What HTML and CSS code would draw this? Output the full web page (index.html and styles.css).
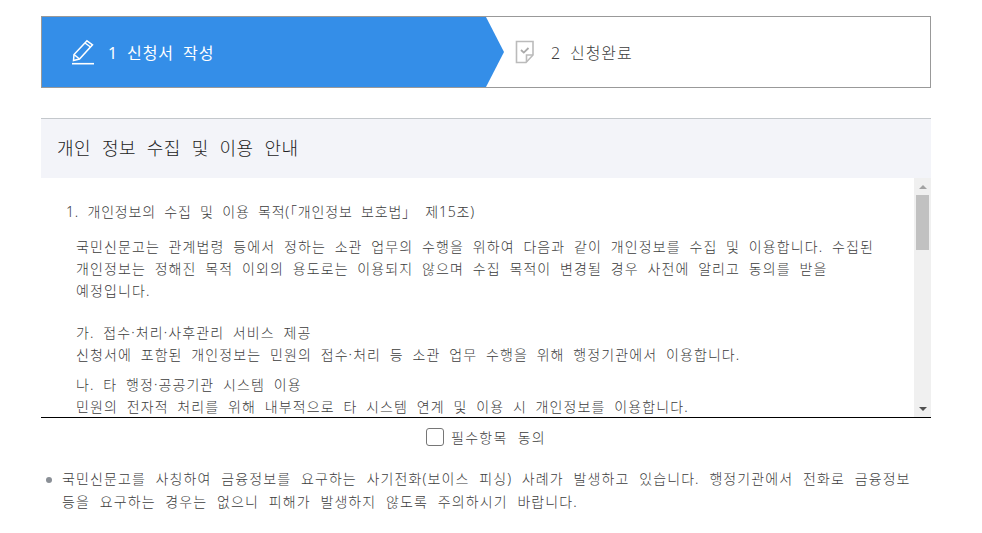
FILE: index.html
```html
<!DOCTYPE html>
<html lang="ko">
<head>
    <meta charset="UTF-8">
    <meta name="viewport" content="width=device-width, initial-scale=1.0">
    <title>신청서 작성</title>
    <link rel="stylesheet" href="styles.css">
</head>
<body>
    <div class="page">

        <!-- Steps -->
        <div class="steps">
            <div class="step step-on">
                <svg class="step-icon" width="24" height="26" viewBox="0 0 24 26" fill="none" stroke="#fff" stroke-width="1.5">
                    <path d="M16 1.8 L21.5 5.8 L8.5 20 L2.5 21.5 L3 15.5 Z"/>
                    <path d="M14 4 L19.5 8"/>
                    <path d="M3 15.5 L8.5 20"/>
                    <path d="M1 24.7 H23" stroke-width="1.6"/>
                </svg>
                <span>1 신청서 작성</span>
            </div>
            <div class="step-arrow"></div>
            <div class="step step-off">
                <svg class="step-icon" width="20" height="24" viewBox="0 0 20 24" fill="none" stroke="#bbb" stroke-width="1.6">
                    <path d="M1.5 1.5 H18 V15 L11 22.5 H1.5 Z"/>
                    <path d="M18 15 H11.5 V22"/>
                    <path d="M6 10 L8.8 12.6 L13.5 8" stroke="#aaa" stroke-width="1.8"/>
                </svg>
                <span>2 신청완료</span>
            </div>
        </div>

        <!-- Terms -->
        <h2 class="terms-title">개인 정보 수집 및 이용 안내</h2>
        <div class="terms-box">
            <div class="terms-text">
                <p class="terms-head">1. 개인정보의 수집 및 이용 목적(「개인정보 보호법」 제15조)</p>
                <p class="terms-para">국민신문고는 관계법령 등에서 정하는 소관 업무의 수행을 위하여 다음과 같이 개인정보를 수집 및 이용합니다. 수집된 개인정보는 정해진 목적 이외의 용도로는 이용되지 않으며 수집 목적이 변경될 경우 사전에 알리고 동의를 받을 예정입니다.</p>
                <p class="terms-item">가. 접수·처리·사후관리 서비스 제공<br>신청서에 포함된 개인정보는 민원의 접수·처리 등 소관 업무 수행을 위해 행정기관에서 이용합니다.</p>
                <p class="terms-item">나. 타 행정·공공기관 시스템 이용<br>민원의 전자적 처리를 위해 내부적으로 타 시스템 연계 및 이용 시 개인정보를 이용합니다.</p>
            </div>
            <div class="scrollbar">
                <div class="scroll-btn scroll-up"></div>
                <div class="scroll-track"><div class="scroll-thumb"></div></div>
                <div class="scroll-btn scroll-down"></div>
            </div>
        </div>

        <label class="agree">
            <span class="agree-box"></span>
            <span>필수항목 동의</span>
        </label>

        <ul class="notice">
            <li>국민신문고를 사칭하여 금융정보를 요구하는 사기전화(보이스 피싱) 사례가 발생하고 있습니다. 행정기관에서 전화로 금융정보 등을 요구하는 경우는 없으니 피해가 발생하지 않도록 주의하시기 바랍니다.</li>
        </ul>
    </div>
</body>
</html>
```

FILE: styles.css
```css
/* Global Styles */
body, html {
    margin: 0;
    padding: 0;
    background-color: #fff;
    color: #3c3c3c;
    font-family: "Noto Sans", "Noto Sans CJK KR", sans-serif;
    font-size: 14px;
    font-weight: 300;
    letter-spacing: 1.1px;
    word-spacing: 5px;
    word-break: keep-all;
}

.page {
    width: 890px;
    margin-left: 41px;
    padding-top: 16px;
}

/* Steps */
.steps {
    display: flex;
    height: 72px;
    box-sizing: border-box;
    border: 1px solid #999;
}

.step {
    display: flex;
    align-items: center;
    font-size: 16px;
    letter-spacing: 0.9px;
    word-spacing: 4px;
}

.step-on {
    width: 444px;
    padding-left: 29px;
    box-sizing: border-box;
    background-color: #348ee8;
    color: #fff;
    font-weight: 400;
}

.step-on .step-icon {
    margin-right: 13px;
}

.step-arrow {
    width: 18px;
    background-color: #348ee8;
    clip-path: polygon(0 0, 100% 50%, 0 100%);
}

.step-off {
    padding-left: 11px;
}

.step-off .step-icon {
    margin-right: 16px;
}

/* Terms */
.terms-title {
    margin: 30px 0 0;
    height: 59px;
    padding-left: 16px;
    border-top: 1px solid #c4c8cc;
    background-color: #f3f4f9;
    color: #222;
    font-size: 18px;
    font-weight: 300;
    letter-spacing: 0.5px;
    word-spacing: 5.6px;
    line-height: 58px;
}

.terms-box {
    display: flex;
    height: 239px;
    overflow: hidden;
    border-bottom: 1px solid #000;
}

.terms-text {
    flex: 1;
    padding: 23px 40px 0 25px;
    line-height: 22px;
    word-spacing: 4px;
}

.terms-text p {
    margin: 0;
}

.terms-head {
    letter-spacing: 0.8px;
}

.terms-para {
    margin-top: 13px !important;
    padding-left: 10px;
}

.terms-item {
    margin-top: 8px !important;
    padding-left: 10px;
}

.terms-para + .terms-item {
    margin-top: 20px !important;
}

/* Scrollbar */
.scrollbar {
    display: flex;
    flex-direction: column;
    flex-shrink: 0;
    width: 17px;
    background-color: #f0f0f0;
}

.scroll-btn {
    height: 17px;
    display: flex;
    align-items: center;
    justify-content: center;
}

.scroll-btn::before {
    content: "";
    border-left: 4px solid transparent;
    border-right: 4px solid transparent;
}

.scroll-up::before {
    border-bottom: 4px solid #a3a3a3;
}

.scroll-down::before {
    border-top: 4px solid #505050;
}

.scroll-track {
    flex: 1;
}

.scroll-thumb {
    width: 13px;
    height: 55px;
    margin-left: 2px;
    background-color: #c1c1c1;
}

/* Agree */
.agree {
    display: flex;
    align-items: center;
    justify-content: center;
    gap: 7px;
    height: 18px;
    margin-top: 10px;
    letter-spacing: 1.3px;
}

.agree-box {
    width: 16px;
    height: 16px;
    border: 1px solid #767676;
    border-radius: 3px;
}

/* Notice */
.notice {
    list-style: none;
    margin: 21px 0 0;
    padding: 0 0 0 21px;
}

.notice li {
    position: relative;
    line-height: 23px;
}

.notice li::before {
    content: "";
    position: absolute;
    left: -16px;
    top: 10px;
    width: 6px;
    height: 6px;
    border-radius: 50%;
    background-color: #8a8f96;
}
```
